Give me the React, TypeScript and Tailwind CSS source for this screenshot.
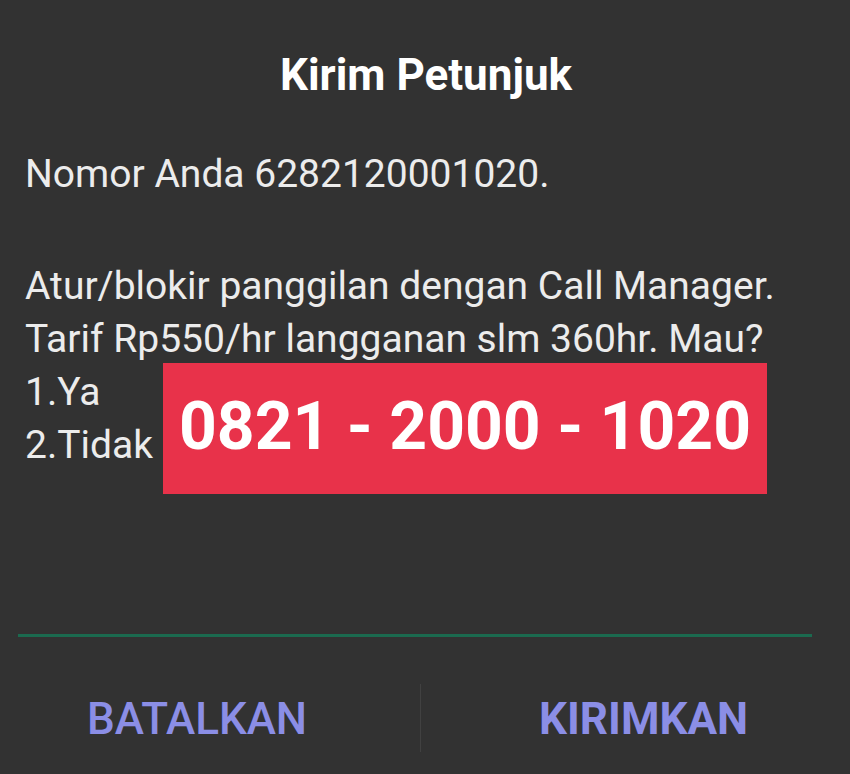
export default function App() {
  return (
    <div
      className="relative flex h-[774px] w-[850px] flex-col overflow-hidden bg-[#323232] text-[#ececec]"
      style={{ fontFamily: "Roboto, 'Liberation Sans', sans-serif" }}
    >
      <div className="pt-[50px] pl-[2px] text-center text-[44px] font-bold leading-[50px] text-white">
        Kirim Petunjuk
      </div>

      <div className="flex flex-col pl-[25px] pt-[48px] text-[39px] leading-[53px]">
        <p>Nomor Anda 6282120001020.</p>
        <p className="h-[59px]"></p>
        <p>Atur/blokir panggilan dengan Call Manager.</p>
        <p>Tarif Rp550/hr langganan slm 360hr. Mau?</p>
        <p>1.Ya</p>
        <p>2.Tidak</p>
      </div>

      <div className="absolute left-[163px] top-[363px] flex h-[131px] w-[604px] items-center justify-center bg-[#e8324a] pb-[4px] text-[66px] font-bold text-white">
        0821 - 2000 - 1020
      </div>

      <div className="mt-auto">
        <div className="ml-[18px] mr-[38px] h-[3px] bg-[#1b6a4f]"></div>
        <div className="flex h-[137px] items-center">
          <button className="w-[420px] pr-[26px] pt-[26px] text-center text-[44px] font-medium text-[#8b8ee6]">
            BATALKAN
          </button>
          <div className="mb-[22px] h-[68px] w-px self-end bg-[#414141]"></div>
          <button className="flex-1 pl-[16px] pt-[26px] text-center text-[44px] font-bold text-[#8b8ee6]">
            KIRIMKAN
          </button>
        </div>
      </div>
    </div>
  );
}
